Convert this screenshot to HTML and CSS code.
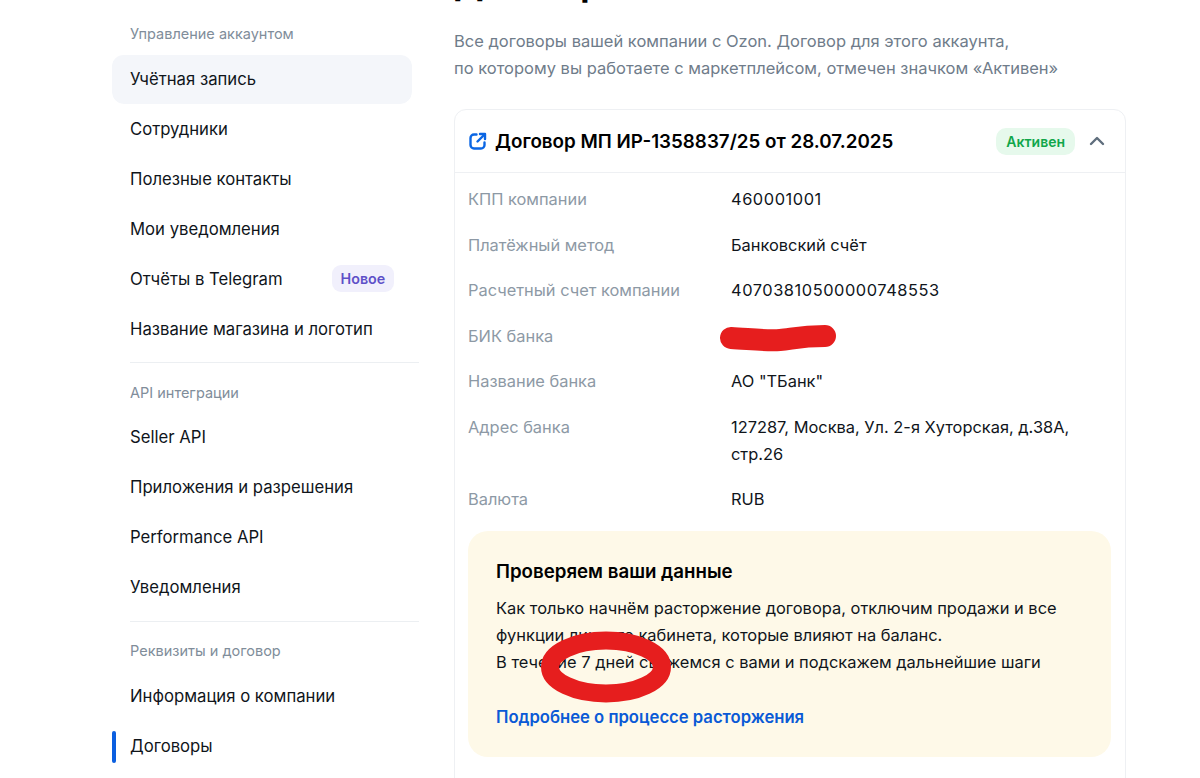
FILE: index.html
```html
<!DOCTYPE html>
<html lang="ru">
<head>
  <meta charset="UTF-8">
  <title>Договоры</title>
  <link rel="stylesheet" href="styles.css">
</head>
<body>
  <div class="page">
    <!-- Боковое меню -->
    <nav class="sidebar">
      <div class="nav-title">Управление аккаунтом</div>
      <a class="nav-item nav-item-current">Учётная запись</a>
      <a class="nav-item">Сотрудники</a>
      <a class="nav-item">Полезные контакты</a>
      <a class="nav-item">Мои уведомления</a>
      <a class="nav-item">Отчёты в Telegram <span class="nav-badge">Новое</span></a>
      <a class="nav-item">Название магазина и логотип</a>
      <div class="nav-divider"></div>

      <div class="nav-title">API интеграции</div>
      <a class="nav-item">Seller API</a>
      <a class="nav-item">Приложения и разрешения</a>
      <a class="nav-item">Performance API</a>
      <a class="nav-item">Уведомления</a>
      <div class="nav-divider"></div>

      <div class="nav-title">Реквизиты и договор</div>
      <a class="nav-item">Информация о компании</a>
      <a class="nav-item nav-item-active">Договоры</a>
    </nav>

    <!-- Основная часть -->
    <main class="content">
      <h1 class="page-title">Договоры</h1>
      <p class="page-desc">Все договоры вашей компании с Ozon. Договор для этого аккаунта,<br>по которому вы работаете с маркетплейсом, отмечен значком «Активен»</p>

      <section class="card">
        <div class="card-header">
          <svg class="card-icon" viewBox="0 0 18 18" fill="none" stroke="#0b66e4" stroke-width="2.400" stroke-linecap="round" stroke-linejoin="round">
            <path d="M7.500 2.500H5A3.500 3.500 0 0 0 1.500 6v7A3.500 3.500 0 0 0 5 16.500h7a3.500 3.500 0 0 0 3.500-3.500v-2.500"/>
            <path d="M11 2h5v5"/>
            <path d="M15.500 2.500L8.500 9.500"/>
          </svg>
          <h2 class="card-title">Договор МП ИР-1358837/25 от 28.07.2025</h2>
          <span class="status">Активен</span>
          <svg class="chevron" viewBox="0 0 16 10" fill="none" stroke="#5f6e7d" stroke-width="2.400" stroke-linecap="round" stroke-linejoin="round">
            <path d="M2 8l6-6 6 6"/>
          </svg>
        </div>

        <div class="card-body">
          <div class="row"><div class="row-label">КПП компании</div><div class="row-value row-value-num">460001001</div></div>
          <div class="row"><div class="row-label">Платёжный метод</div><div class="row-value">Банковский счёт</div></div>
          <div class="row"><div class="row-label">Расчетный счет компании</div><div class="row-value row-value-num">40703810500000748553</div></div>
          <div class="row">
            <div class="row-label">БИК банка</div>
            <div class="row-value">
              <svg class="scribble" viewBox="0 0 116 32" fill="none" stroke="#e61e1e" stroke-width="22" stroke-linecap="round" stroke-linejoin="round">
                <path d="M11 16C30 17 46 19 60 18C72 17 80 14 105 14"/>
              </svg>
            </div>
          </div>
          <div class="row"><div class="row-label">Название банка</div><div class="row-value">АО "ТБанк"</div></div>
          <div class="row"><div class="row-label">Адрес банка</div><div class="row-value">127287, Москва, Ул. 2-я Хуторская, д.38А, стр.26</div></div>
          <div class="row"><div class="row-label">Валюта</div><div class="row-value">RUB</div></div>

          <div class="notice">
            <h3 class="notice-title">Проверяем ваши данные</h3>
            <p class="notice-text">Как только начнём расторжение договора, отключим продажи и все функции личного кабинета, которые влияют на баланс.<br>В течение 7 дней свяжемся с вами и подскажем дальнейшие шаги</p>
            <a class="notice-link">Подробнее о процессе расторжения</a>
            <svg class="circle-mark" viewBox="0 0 130 72" fill="none" stroke="#e61e1e" stroke-width="18">
              <ellipse cx="65" cy="36" rx="56" ry="26.500"/>
            </svg>
          </div>
        </div>
      </section>
    </main>
  </div>
</body>
</html>
```

FILE: styles.css
```css
/* Общие настройки страницы */
html, body {
  height: 100%;
}

body {
  margin: 0;
  background: #ffffff;
  color: #07090c;
  font-family: 'Inter', 'Noto Sans', sans-serif;
  overflow: hidden;
}

.page {
  display: flex;
  align-items: flex-start;
  height: 778px;
  overflow: hidden;
  padding-left: 112px;
  box-sizing: border-box;
}

/* Боковое меню */
.sidebar {
  flex-shrink: 0;
  width: 307px;
  padding-top: 24px;
  margin-right: 35px;
}

.nav-title {
  height: 20px;
  margin-left: 18px;
  margin-bottom: 9.500px;
  color: #808d9a;
  font-size: 14.500px;
  line-height: 20px;
}

.nav-item {
  position: relative;
  display: flex;
  align-items: center;
  width: 300px;
  height: 50px;
  padding-left: 18px;
  box-sizing: border-box;
  font-size: 16.700px;
  color: #10151b;
}

.nav-item-current {
  background: #f4f6fa;
  background-clip: padding-box;
  border-top: 1px solid transparent;
  padding-bottom: 1px;
  border-radius: 12px;
}

.nav-item-active:before {
  content: "";
  position: absolute;
  left: 0;
  top: 10px;
  width: 4px;
  height: 32px;
  background: #0b5fe0;
  border-radius: 2px;
}

.nav-badge {
  margin-left: 49px;
  padding: 0 9px;
  height: 27px;
  line-height: 27px;
  background: #f1f0fc;
  border-radius: 9px;
  color: #5e50c8;
  font-size: 14.300px;
  font-weight: 600;
}

.nav-divider {
  height: 1px;
  margin: 8.500px 0 19.500px 18px;
  background: #eceff2;
}

/* Основная часть */
.content {
  width: 672px;
  flex-shrink: 0;
}

.page-title {
  margin: -35px 0 0;
  height: 38px;
  font-size: 34px;
  line-height: 38px;
  font-weight: 700;
  color: #000000;
}

.page-desc {
  margin: 25px 0 27px;
  color: #6f7c8a;
  font-size: 16.500px;
  line-height: 27px;
}

.card {
  border: 1px solid #eef0f3;
  border-radius: 12px;
}

.card-header {
  display: flex;
  align-items: center;
  height: 62px;
  padding: 0 20px 0 14px;
  border-bottom: 1px solid #eef0f3;
}

.card-icon {
  width: 18px;
  height: 18px;
  margin-right: 8px;
}

.card-title {
  flex: 1;
  margin: 0;
  font-size: 18.800px;
  font-weight: 600;
  color: #000000;
}

.status {
  height: 27px;
  padding: 0 10px;
  background: #e6f9ec;
  border-radius: 10px;
  color: #10a64a;
  font-size: 14px;
  font-weight: 600;
  line-height: 27px;
}

.chevron {
  width: 16px;
  height: 10px;
  margin-left: 14px;
}

.card-body {
  padding: 13px 14px 40px 13px;
}

.row {
  display: flex;
  line-height: 27px;
  margin-bottom: 18.500px;
}

.row-label {
  width: 263px;
  flex-shrink: 0;
  color: #8d99a5;
  font-size: 16.400px;
}

.row-value {
  position: relative;
  width: 380px;
  color: #10151b;
  font-size: 16.400px;
}

/* Цифры в макете идут шире */
.row-value-num {
  letter-spacing: 0.550px;
}

/* Красная отметка поверх значения */
.scribble {
  position: absolute;
  left: -11px;
  top: -1px;
  width: 116px;
  height: 32px;
}

/* Блок с предупреждением */
.notice {
  position: relative;
  height: 226px;
  padding: 27px 28px 0;
  box-sizing: border-box;
  margin-top: -0.500px;
  background: #fef9e8;
  border-radius: 20px;
}

.notice-title {
  margin: 0 0 9px;
  font-size: 18.700px;
  line-height: 28px;
  font-weight: 600;
  color: #000000;
}

.notice-text {
  margin: 0 0 28px;
  width: 580px;
  font-size: 16.450px;
  line-height: 27px;
  color: #10151b;
}

.notice-link {
  color: #0a5ad6;
  font-size: 16.650px;
  line-height: 27px;
  font-weight: 600;
}

.circle-mark {
  position: absolute;
  left: 73px;
  top: 100px;
  width: 130px;
  height: 72px;
}
```
